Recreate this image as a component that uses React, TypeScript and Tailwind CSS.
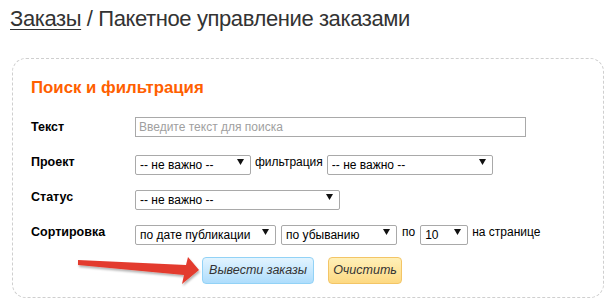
import { ReactNode } from "react";

function Select({ value, width }: { value: string; width: string }) {
  return (
    <div className={`relative h-[20px] ${width}`}>
      <select
        defaultValue={value}
        className="appearance-none w-full h-full border border-[#a9a9a9] rounded-[2px] bg-white pl-[4px] pr-[18px] text-[12px] leading-[18px] text-black outline-none"
      >
        <option>{value}</option>
      </select>
      <svg
        className="absolute right-[7px] top-[7px] pointer-events-none"
        width="7"
        height="6"
        viewBox="0 0 7 6"
      >
        <path d="M0 0 L7 0 L3.5 6 Z" fill="#111" />
      </svg>
    </div>
  );
}

function Row({ label, children }: { label: string; children: ReactNode }) {
  return (
    <div className="flex items-center h-[20px]">
      <div className="w-[104px] font-bold text-[12.5px] text-black">{label}</div>
      {children}
    </div>
  );
}

export default function App() {
  return (
    <div className="relative w-[609px] h-[301px] bg-white overflow-hidden font-['Liberation_Sans',Arial,sans-serif]">
      <h1 className="pl-[10px] pt-[5px] text-[22px] leading-[28px] tracking-[-0.4px] text-[#333]">
        <a href="#" className="underline underline-offset-[3px] decoration-[1px]">
          Заказы
        </a>{" "}
        / Пакетное управление заказами
      </h1>

      <section className="mt-[25px] ml-[12px] w-[592px] h-[240px] border border-dashed border-[#cfcfcf] rounded-[14px] px-[18px] pt-[19px]">
        <h2 className="text-[16.8px] leading-[20px] font-bold text-[#ff6000]">
          Поиск и фильтрация
        </h2>

        <div className="mt-[19px] flex flex-col gap-[15px]">
          <Row label="Текст">
            <input
              placeholder="Введите текст для поиска"
              className="w-[391px] h-[20px] border border-[#a9a9a9] px-[3px] text-[12px] placeholder:text-[#a0a0a0] outline-none"
            />
          </Row>
          <Row label="Проект">
            <Select value="-- не важно --" width="w-[116px]" />
            <span className="ml-[4px] mr-[4px] text-[12px] text-black">фильтрация</span>
            <Select value="-- не важно --" width="w-[166px]" />
          </Row>
          <Row label="Статус">
            <Select value="-- не важно --" width="w-[205px]" />
          </Row>
          <Row label="Сортировка">
            <Select value="по дате публикации" width="w-[141px]" />
            <div className="w-[5px]" />
            <Select value="по убыванию" width="w-[116px]" />
            <span className="mx-[5px] text-[12px] text-black">по</span>
            <Select value="10" width="w-[48px]" />
            <span className="ml-[4px] text-[12px] text-black">на странице</span>
          </Row>
          <div className="flex gap-[14px] ml-[171px]">
            <button className="w-[112px] h-[27px] rounded-[4px] border border-[#92d2f6] bg-gradient-to-b from-[#e2f4ff] to-[#aeddfc] text-[12.5px] italic text-[#333]">
              Вывести заказы
            </button>
            <button className="w-[74px] h-[27px] rounded-[4px] border border-[#f3c566] bg-gradient-to-b from-[#fff0b8] to-[#fdd982] text-[12.5px] italic text-[#333]">
              Очистить
            </button>
          </div>
        </div>
      </section>

      <svg
        className="absolute left-0 top-0 pointer-events-none"
        width="609"
        height="301"
        viewBox="0 0 609 301"
      >
        <defs>
          <filter id="sh" x="-10%" y="-50%" width="120%" height="200%">
            <feDropShadow dx="1" dy="2" stdDeviation="1.2" floodColor="#000" floodOpacity="0.3" />
          </filter>
        </defs>
        <path
          d="M78 260 L186 265 L188 257 L199 270 L182 284 L184 275 L78 265 Z"
          fill="#e33b2d"
          filter="url(#sh)"
        />
      </svg>
    </div>
  );
}
